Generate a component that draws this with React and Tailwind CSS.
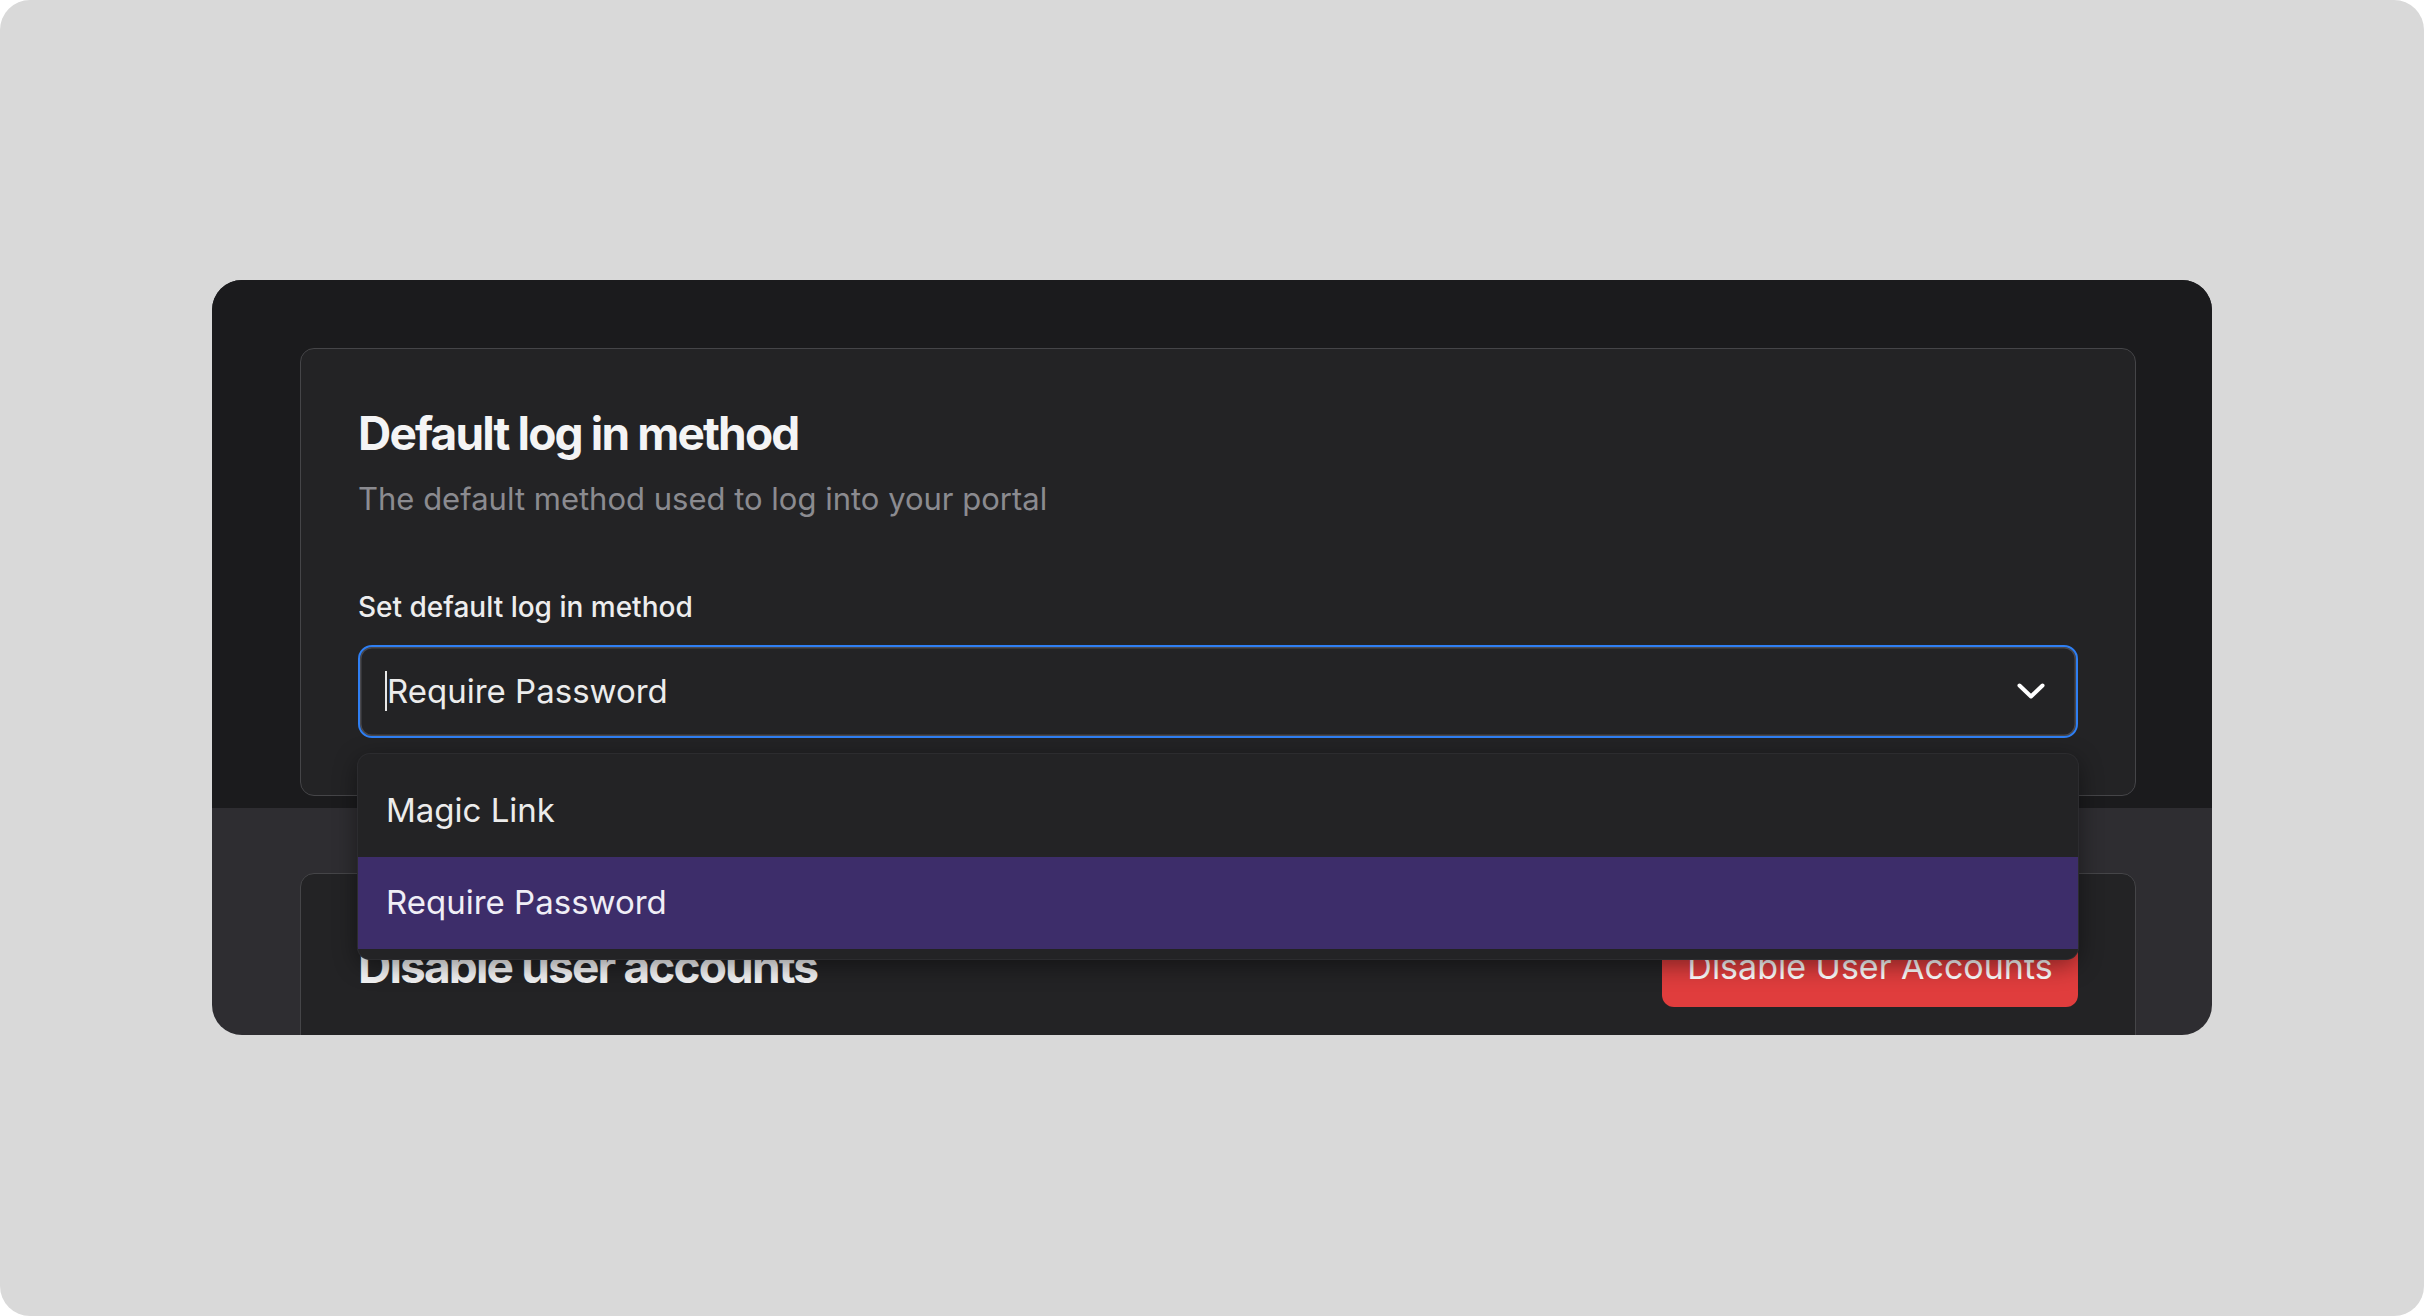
import React from "react";

function Chevron() {
  return (
    <svg width="30" height="18" viewBox="0 0 30 18" fill="none">
      <path d="M3.5 3.5L15 14.5L26.5 3.5" stroke="#ffffff" strokeWidth="4" strokeLinecap="round" strokeLinejoin="round" />
    </svg>
  );
}

export default function App() {
  return (
    <div className="h-[1316px] w-[2424px] bg-white" style={{ fontFamily: "Inter, 'Noto Sans', sans-serif" }}>
      <div className="flex h-full w-full items-start justify-center rounded-[30px] bg-[#d9d9d9] pt-[280px]">
        <div className="flex h-[755px] w-[2000px] flex-col overflow-hidden rounded-[30px] bg-[#2e2d31]">
          {/* upper section */}
          <div className="bg-[#1b1b1d] pb-[12px] pl-[88px] pr-[76px] pt-[68px]">
            <div className="rounded-[14px] border border-[#454548] bg-[#232325] p-[57px]">
              <h1 className="text-[46px] font-bold leading-[1.2] tracking-[-0.04em] text-[#f4f4f5]">Default log in method</h1>
              <p className="mt-[18px] text-[31px] leading-[1.3] text-[#8b8b90]">The default method used to log into your portal</p>

              <label className="mt-[70px] block text-[28px] font-medium leading-[1.3] text-[#ededee]">Set default log in method</label>
              <div className="relative mt-[19px]">
                <div className="flex h-[93px] items-center justify-between rounded-[14px] border-2 border-[#2f7ff3] bg-[#232325] pl-[25px] pr-[30px] shadow-[inset_0_0_0_1.5px_#49484d]">
                  <div className="flex items-center">
                    <span className="h-[40px] w-[2px] bg-[#e8e8e8]" />
                    <span className="text-[33px] text-[#ececec]">Require Password</span>
                  </div>
                  <Chevron />
                </div>

                <div className="absolute left-0 right-0 top-[109px] z-10 rounded-[12px] bg-[#232325] py-[10px] shadow-[0_6px_24px_rgba(0,0,0,0.45)] ring-1 ring-[#2c2c2f]">
                  <div className="flex h-[93px] items-center px-[28px] text-[33px] text-[#ececec]">Magic Link</div>
                  <div className="flex h-[92px] items-center bg-[#3d2d6a] px-[28px] text-[33px] text-[#f0eef6]">Require Password</div>
                </div>
              </div>
            </div>
          </div>

          {/* lower section */}
          <div className="flex-1 pl-[88px] pr-[76px] pt-[65px]">
            <div className="h-[300px] rounded-[14px] border border-[#454548] bg-[#232325] px-[57px] pt-[53px]">
              <div className="flex items-center justify-between">
                <h2 className="text-[46px] font-bold leading-[1.2] tracking-[-0.04em] text-[#f4f4f5]">Disable user accounts</h2>
                <button type="button" className="flex h-[80px] w-[416px] items-center justify-center rounded-[12px] bg-[#e03d3d] text-[34px] text-white">
                  Disable User Accounts
                </button>
              </div>
            </div>
          </div>
        </div>
      </div>
    </div>
  );
}
